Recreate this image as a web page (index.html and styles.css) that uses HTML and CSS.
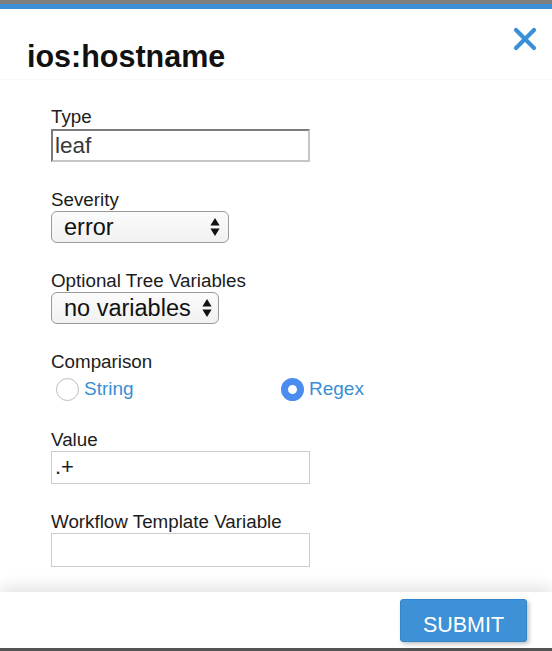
FILE: index.html
```html
<!DOCTYPE html>
<html>
<head>
<meta charset="utf-8">
<link rel="stylesheet" href="styles.css">
</head>
<body>
<div class="modal">
  <div class="topbar"></div>
  <div class="accent"></div>
  <div class="header">
    <h1 class="title">ios:hostname</h1>
    <span class="close" aria-label="close">
      <svg width="24" height="24" viewBox="0 0 24 24"><path d="M3 3 L21 21 M21 3 L3 21" stroke="#3b8fd6" stroke-width="4.2" stroke-linecap="round"/></svg>
    </span>
  </div>
  <div class="body">
    <div class="group">
      <div class="label">Type</div>
      <div class="input inset">leaf</div>
    </div>
    <div class="group">
      <div class="label">Severity</div>
      <div class="select sel-sev"><span>error</span>
        <svg class="arrows" width="10" height="22" viewBox="0 0 10 22"><path d="M5 2 L9.6 9.5 L0.4 9.5 Z M0.4 12.5 L9.6 12.5 L5 20 Z" fill="#111"/></svg>
      </div>
    </div>
    <div class="group">
      <div class="label">Optional Tree Variables</div>
      <div class="select sel-var"><span>no variables</span>
        <svg class="arrows" width="10" height="22" viewBox="0 0 10 22"><path d="M5 2 L9.6 9.5 L0.4 9.5 Z M0.4 12.5 L9.6 12.5 L5 20 Z" fill="#111"/></svg>
      </div>
    </div>
    <div class="group">
      <div class="label">Comparison</div>
      <div class="radios">
        <div class="radio-item"><span class="radio"></span><span class="rlabel">String</span></div>
        <div class="radio-item"><span class="radio checked"></span><span class="rlabel">Regex</span></div>
      </div>
    </div>
    <div class="group">
      <div class="label">Value</div>
      <div class="input plain">.+</div>
    </div>
    <div class="group">
      <div class="label">Workflow Template Variable</div>
      <div class="input plain tall"></div>
    </div>
  </div>
  <div class="footer">
    <button class="submit">SUBMIT</button>
  </div>
  <div class="bottomline"></div>
</div>
</body>
</html>
```

FILE: styles.css
```css
html, body {
  margin: 0;
  padding: 0;
  background: #fff;
}
body {
  font-family: "Liberation Sans", Arial, sans-serif;
  color: #1c1c1c;
}
.modal {
  width: 552px;
  height: 651px;
  display: flex;
  flex-direction: column;
  position: relative;
  overflow: hidden;
  background: #fff;
}
.topbar {
  flex-shrink: 0;
  height: 4px;
  background: #7f7f7f;
}
.accent {
  flex-shrink: 0;
  height: 5px;
  background: #3d8fd6;
}
.header {
  flex-shrink: 0;
  height: 71px;
  padding-left: 27px;
  box-sizing: border-box;
  border-bottom: 1px solid #f8f8f8;
  position: relative;
}
.title {
  margin: 0;
  padding-top: 30px;
  font-size: 30.5px;
  line-height: 34px;
  font-weight: bold;
  color: #111;
}
.close {
  position: absolute;
  right: 15px;
  top: 18px;
  width: 24px;
  height: 24px;
}
.close svg { display: block; }
.body {
  flex: 1 1 auto;
  min-height: 0;
  overflow: hidden;
  padding: 27px 0 0 51px;
}
.group {
  margin-bottom: 28px;
}
.label {
  font-size: 18.8px;
  line-height: 20px;
  color: #1c1c1c;
}
.input {
  box-sizing: border-box;
  width: 259px;
  height: 33px;
  margin-top: 1px;
}
.inset {
  border: 2px solid;
  border-color: #7b7b7b #c6c6c6 #c6c6c6 #7b7b7b;
  margin-top: 2px;
  color: #3a3a3a;
  font-size: 22.5px;
  line-height: 29px;
  padding-left: 2px;
}
.plain {
  border: 1px solid #cccccc;
  font-size: 22px;
  line-height: 30px;
  color: #1a1a1a;
  padding-left: 3px;
}
.tall { height: 34px; }
.select {
  box-sizing: border-box;
  height: 32px;
  margin-top: 1px;
  border: 1px solid #9a9a9a;
  border-radius: 6px;
  background: linear-gradient(#fbfbfb, #f1f1f1);
  display: flex;
  align-items: center;
  justify-content: space-between;
  padding: 0 8px 0 12px;
  font-size: 23.5px;
  color: #111;
}
.sel-sev { width: 178px; }
.sel-var { width: 168px; padding-right: 6px; }
.arrows { display: block; }
.radios {
  display: flex;
  margin-top: 4px;
  height: 26px;
  align-items: center;
}
.radio-item {
  box-sizing: border-box;
  display: flex;
  align-items: center;
  width: 225px;
  padding-left: 5px;
}
.radio {
  box-sizing: border-box;
  width: 23px;
  height: 23px;
  border-radius: 50%;
  border: 1px solid #bdbdbd;
  background: #fff;
  margin-right: 5px;
}
.radio.checked {
  border: 7.5px solid #4a8cf0;
  background: #fff;
}
.rlabel {
  font-size: 19px;
  color: #3a8ed4;
}
.footer {
  flex-shrink: 0;
  height: 56px;
  box-shadow: 0 -6px 14px rgba(0,0,0,0.1);
  display: flex;
  justify-content: flex-end;
  align-items: flex-start;
  padding-right: 25px;
  background: #fff;
  position: relative;
}
.submit {
  margin-top: 7px;
  width: 127px;
  height: 43px;
  border: 1px solid #3484c8;
  border-radius: 3px;
  background: #3e91d6;
  color: #fff;
  font-family: "Liberation Sans", Arial, sans-serif;
  font-size: 21.5px;
  box-shadow: 2px 2px 4px rgba(0,0,0,0.25);
  padding: 9px 0 0 0;
}
.bottomline {
  flex-shrink: 0;
  height: 3px;
  background: #555;
}
```
